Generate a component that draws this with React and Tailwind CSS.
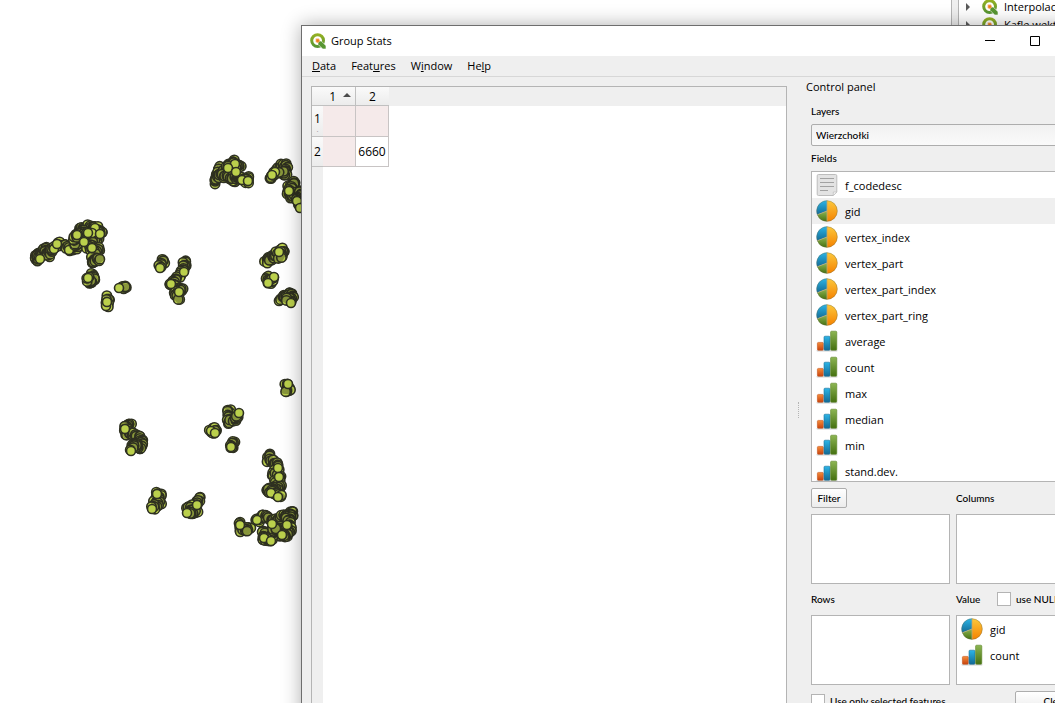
import React from "react";

const CLUSTERS = [
  { path: [[215,182],[220,168],[217,178],[233,161],[240,166],[228,168],[234,180],[224,176],[238,178],[248,178],[247,183]], dots: [[235,164],[228,168],[236,172],[242,180],[248,181]] },
  { path: [[271,179],[275,172],[281,165],[287,166],[286,175],[280,172]], dots: [[275,172],[272,175]] },
  { path: [[289,188],[294,182],[287,194],[293,197],[301,190],[297,202],[301,207]], dots: [[289,191],[297,201],[300,208]] },
  { path: [[266,260],[272,257],[269,261],[279,252],[284,250],[279,259]], dots: [[279,252]] },
  { path: [[267,277],[270,283],[273,278]], dots: [[274,277],[268,283]] },
  { path: [[281,299],[286,295],[292,294],[292,300],[286,299]], dots: [[291,303]] },
  { path: [[35,255],[40,252],[36,260],[45,248],[48,256],[58,243],[64,245],[72,250],[80,244]], dots: [[40,259],[54,249],[57,244],[69,250]] },
  { path: [[77,248],[75,238],[79,230],[89,226],[98,228],[101,231],[98,238],[85,237],[82,230],[92,243],[88,248],[98,249],[93,258],[93,264],[100,258]], dots: [[95,228],[92,233],[77,235],[88,233],[100,234],[84,242],[92,248]] },
  { path: [[91,274],[94,279],[90,283],[88,277]], dots: [[88,278]] },
  { path: [[108,297],[107,306]], dots: [[106,306],[107,302]] },
  { path: [[121,287],[127,288]], dots: [[119,288]] },
  { path: [[164,260],[159,266]], dots: [[160,268]] },
  { path: [[185,261],[183,272],[171,284],[182,290],[175,293],[179,299]], dots: [[184,272],[171,284],[179,292]] },
  { path: [[130,424],[125,425],[127,435],[134,434],[142,441],[141,448],[134,443],[131,450]], dots: [[125,429],[131,451]] },
  { path: [[286,385],[289,390],[285,390]], dots: [[288,384]] },
  { path: [[229,410],[230,419],[227,422],[234,419],[238,414]], dots: [[239,413]] },
  { path: [[210,431],[215,429],[214,434]], dots: [[211,431],[215,433]] },
  { path: [[235,442],[231,445],[233,448]], dots: [[231,447]] },
  { path: [[157,493],[161,496],[155,502],[160,502],[152,509]], dots: [[157,494],[152,509]] },
  { path: [[199,498],[196,505],[188,508],[196,512],[188,514]], dots: [[197,505],[187,513]] },
  { path: [[269,455],[268,460],[275,462],[278,468],[274,474],[281,478],[276,482],[281,487],[267,490],[274,492],[281,497]], dots: [[278,468],[279,477],[271,493],[278,497]] },
  { path: [[240,524],[241,531],[249,527],[246,532]], dots: [[240,525]] },
  { path: [[257,521],[265,516],[272,522],[283,516],[293,513],[288,519],[290,532],[280,530],[288,536],[270,533],[264,533],[263,538],[269,541],[276,527]], dots: [[257,520],[272,524],[287,525],[282,535],[264,538],[271,541]] },
];

const noise = (n) => {
  const v = Math.sin(n * 127.1 + 11.7) * 43758.5453;
  return v - Math.floor(v) - 0.5;
};

const spread = (path) => {
  const out = [];
  path.slice(1).forEach(([x2, y2], i) => {
    const [x1, y1] = path[i];
    const steps = Math.max(4, Math.round(Math.hypot(x2 - x1, y2 - y1) / 0.9));
    for (let s = 0; s < steps; s++) {
      const n = x1 * 3 + y1 * 7 + s + i * 13;
      out.push([
        x1 + ((x2 - x1) * s) / steps + noise(n) * 4,
        y1 + ((y2 - y1) * s) / steps + noise(n + 500) * 4,
      ]);
    }
  });
  return out;
};

const Vertex = ({ at, r = 4.7 }) => (
  <circle cx={at[0]} cy={at[1]} r={r} fill="#bbd04c" stroke="#2f3122" strokeWidth="1.6" />
);

const MapCanvas = () => (
  <svg width="952" height="703" className="block shrink-0" role="img" aria-label="Map canvas">
    {CLUSTERS.map((c, i) => (
      <g key={i}>
        {spread(c.path).map((p, j) => <Vertex key={j} at={p} />)}
        <polyline points={c.path.join(" ")} fill="none" stroke="#2a2c1d" strokeOpacity="0.35" strokeWidth="8" strokeLinejoin="round" strokeLinecap="round" />
        {c.dots.map((p, j) => <Vertex key={j} at={p} r={4.5} />)}
      </g>
    ))}
  </svg>
);

const QgisLogo = () => (
  <svg width="16" height="16" viewBox="0 0 16 16" className="shrink-0" aria-hidden="true">
    <defs>
      <linearGradient id="qg" x1="0" y1="0" x2="0" y2="1">
        <stop offset="0" stopColor="#93b023" />
        <stop offset="1" stopColor="#589632" />
      </linearGradient>
    </defs>
    <circle cx="7.600" cy="7.600" r="5.900" fill="none" stroke="url(#qg)" strokeWidth="3" />
    <path d="M8 8h3.200l4.800 4.700V16h-3.300L8 11.300Z" fill="#589632" stroke="#fff" strokeWidth=".6" />
    <path d="M5.600 5.600H9L10.200 8 8 10.200 5.600 9Z" fill="#f6b26b" />
    <path d="M6.400 6.400h2.400v2.400H6.400Z" fill="#ee7913" />
  </svg>
);

const PieIcon = () => (
  <svg width="22" height="22" viewBox="0 0 22 22" className="shrink-0" aria-hidden="true">
    <defs>
      <linearGradient id="po" x1="0" y1="0" x2="0" y2="1"><stop offset="0" stopColor="#fcc83c" /><stop offset="1" stopColor="#f58200" /></linearGradient>
      <linearGradient id="pb" x1="0" y1="0" x2="0" y2="1"><stop offset="0" stopColor="#2cb5e8" /><stop offset="1" stopColor="#136a94" /></linearGradient>
      <linearGradient id="pg" x1="0" y1="0" x2="0" y2="1"><stop offset="0" stopColor="#8db653" /><stop offset="1" stopColor="#457010" /></linearGradient>
    </defs>
    <path d="M11 .5a10.500 10.500 0 0 1 0 21Z" fill="url(#po)" />
    <path d="M11 .5a10.500 10.500 0 0 0-9.800 14.300L11 11Z" fill="url(#pb)" />
    <path d="M11 21.500a10.500 10.500 0 0 1-9.800-6.700L11 11Z" fill="url(#pg)" />
    <path d="M11 .5v21M11 11l-9.800 3.800" stroke="#b9a77a" strokeWidth=".8" />
    <circle cx="11" cy="11" r="10.300" fill="none" stroke="#6b6b4a" strokeOpacity=".5" strokeWidth=".7" />
  </svg>
);

const BarsIcon = () => (
  <svg width="22" height="22" viewBox="0 0 22 22" className="shrink-0" aria-hidden="true">
    <defs>
      <linearGradient id="br" x1="0" y1="0" x2="0" y2="1"><stop offset="0" stopColor="#f58d3a" /><stop offset="1" stopColor="#c8430f" /></linearGradient>
    </defs>
    <rect x=".5" y="20" width="21" height="1.600" rx=".8" fill="#cfcfcf" />
    <rect x="1.400" y="12.400" width="5.900" height="7.800" rx="1" fill="url(#br)" stroke="#c4501a" strokeWidth=".6" />
    <rect x="8" y="6.200" width="6" height="14" rx="1" fill="url(#pb)" stroke="#1c7198" strokeWidth=".6" />
    <rect x="14.600" y="1.200" width="6.200" height="19" rx="1" fill="url(#pg)" stroke="#5c8428" strokeWidth=".6" />
  </svg>
);

const TextIcon = () => (
  <svg width="22" height="22" viewBox="0 0 22 22" className="shrink-0" aria-hidden="true">
    <path d="M2.500.5h17a1.300 1.300 0 0 1 1.300 1.300V18l-3.500 3.500H2.500a1.300 1.300 0 0 1-1.300-1.300V1.800A1.300 1.300 0 0 1 2.500.5Z" fill="#e3e3e3" stroke="#bdbdbd" />
    <path d="M17.300 21.500V18h3.500Z" fill="#fafafa" stroke="#bdbdbd" strokeWidth=".7" />
    <path d="M4 4.500h14M4 8.500h14M4 12.500h14M4 16.500h8" stroke="#a2a2a2" />
  </svg>
);

const ICONS = { text: TextIcon, pie: PieIcon, bars: BarsIcon };

const FieldItem = ({ icon, name, selected }) => {
  const Icon = ICONS[icon];
  return (
    <li className={"flex h-[26px] items-center gap-[7px] pl-1 font-['Open_Sans','Noto_Sans',sans-serif] text-[11px] " + (selected ? "bg-[#efefef]" : "")}>
      <Icon />
      <span className="pt-0.5">{name}</span>
    </li>
  );
};

const FIELDS = [
  ["text", "f_codedesc"],
  ["pie", "gid", true],
  ["pie", "vertex_index"],
  ["pie", "vertex_part"],
  ["pie", "vertex_part_index"],
  ["pie", "vertex_part_ring"],
  ["bars", "average"],
  ["bars", "count"],
  ["bars", "max"],
  ["bars", "median"],
  ["bars", "min"],
  ["bars", "stand.dev."],
];

const BOX = "border border-[#b4b4b4] bg-white overflow-hidden";
const BUTTON = "rounded-xs border border-[#adadad] bg-linear-to-b from-white to-[#ececec] text-[10px] leading-4";
const HEAD = "border-[#c0c0c0] bg-linear-to-b from-[#fafafa] to-[#ececec] p-0 font-normal";
const CHECK = "size-[14px] shrink-0 appearance-none border border-[#b4b4b4] bg-white checked:bg-[#5a9632]";

const MENUS = [["", "D", "ata"], ["Feat", "u", "res"], ["W", "i", "ndow"], ["He", "l", "p"]];

const ResultTable = () => (
  <div className="relative flex-1 border border-[#b4b4b4] bg-white">
    <div className="flex h-full flex-col">
      <div className="h-[19px] shrink-0 bg-[#efefef]" />
      <div className="w-[11px] flex-1 bg-[#efefef]" />
    </div>
    <table className="absolute top-0 left-0 w-[77px] table-fixed border-separate border-spacing-0 text-center text-xs">
      <colgroup>
        <col className="w-[11px]" />
        <col className="w-[33px]" />
        <col className="w-[33px]" />
      </colgroup>
      <thead>
        <tr className="h-[19px]">
          <th className={HEAD + " border-b"} />
          <th className={HEAD + " border-r border-b"}>
            <span className="flex items-center justify-end gap-[7px] pt-0.5 pr-1 leading-4">
              1
              <svg width="8" height="8" viewBox="0 0 8 8" aria-hidden="true"><path d="M0 4 4 0l4 4Z" fill="#4c4c4c" /></svg>
            </span>
          </th>
          <th className={HEAD + " border-b pt-0.5 leading-4"}>2</th>
        </tr>
      </thead>
      <tbody>
        <tr className="h-[31px]">
          <th className={HEAD + " border-b"}>
            <span className="block leading-4">1</span>
            <span className="block text-[8px] leading-1 text-[#999]">.</span>
          </th>
          <td className="border-r border-b border-[#c8c4c4] bg-[#f5eaea] p-0" />
          <td className="border-r border-b border-[#c8c4c4] bg-[#f5eaea] p-0" />
        </tr>
        <tr className="h-[30px]">
          <th className={HEAD + " border-b"}>2</th>
          <td className="border-r border-b border-[#c8c4c4] bg-[#f5eaea] p-0" />
          <td className="border-r border-b border-[#c8c4c4] bg-white p-0">6660</td>
        </tr>
      </tbody>
    </table>
  </div>
);

const ControlPanel = () => (
  <section className="w-[289px] shrink-0">
    <h2 className="text-[11px] leading-5">Control panel</h2>
    <div className="flex flex-col pl-[5px] font-['Lato','Open_Sans',sans-serif] text-[10px] font-medium">
      <label htmlFor="layers" className="mt-1.5 mb-[5px] leading-4">Layers</label>
      <select id="layers" className="h-[22px] appearance-none rounded-xs border border-[#adadad] bg-linear-to-b from-[#f1f1f1] to-[#fafafa] pl-1">
        <option>Wierzchołki</option>
      </select>
      <h3 className="mt-1 mb-[5px] leading-4">Fields</h3>
      <ul className={BOX + " h-[311px] font-normal"}>
        {FIELDS.map(([icon, name, sel]) => <FieldItem key={name} icon={icon} name={name} selected={sel} />)}
      </ul>
      <div className="mt-1.5 grid grid-cols-2 gap-x-1.5">
        <div className="flex h-5 items-center">
          <button type="button" className={BUTTON + " h-5 w-9"}>Filter</button>
        </div>
        <h3 className="flex h-5 items-center">Columns</h3>
        <div className={BOX + " mt-1.5 h-[70px]"} />
        <div className={BOX + " mt-1.5 h-[70px]"} />
        <h3 className="mt-[5px] flex h-5 items-center">Rows</h3>
        <div className="mt-[5px] flex h-5 items-center">
          <h3 className="w-[41px]">Value</h3>
          <label className="flex items-center gap-[5px] whitespace-nowrap">
            <input type="checkbox" className={CHECK} />
            use NULL
          </label>
        </div>
        <div className={BOX + " mt-1.5 h-[70px]"} />
        <ul className={BOX + " mt-1.5 h-[70px] font-normal"}>
          <FieldItem icon="pie" name="gid" />
          <FieldItem icon="bars" name="count" />
        </ul>
      </div>
      <div className="mt-1.5 flex items-center justify-between">
        <label className="flex items-center gap-[5px]">
          <input type="checkbox" className={CHECK} />
          Use only selected features
        </label>
        <button type="button" className={BUTTON + " h-5 w-20"}>Clear</button>
      </div>
    </div>
  </section>
);

const TreeItem = ({ children }) => (
  <li className="flex h-[18px] items-center">
    <svg width="4" height="8" viewBox="0 0 4 8" className="mr-3 ml-[7px] shrink-0" aria-hidden="true"><path d="M0 0 4 4 0 8Z" fill="#5a5a5a" /></svg>
    <QgisLogo />
    <span className="ml-1.5 text-[11px] whitespace-nowrap">{children}</span>
  </li>
);

export default function App() {
  return (
    <div className="relative h-screen overflow-hidden bg-white font-['Open_Sans','Noto_Sans',sans-serif] text-black">
      <div className="flex h-full">
        <main className="flex-1 overflow-hidden"><MapCanvas /></main>
        <aside className="flex w-[104px] shrink-0">
          <div className="w-2 border-x border-[#b4b4b4] bg-[#efefef]" />
          <ul className="-mt-0.5 flex-1 overflow-hidden">
            <TreeItem>Interpolacja</TreeItem>
            <TreeItem>Kafle wektorowe</TreeItem>
          </ul>
        </aside>
      </div>
      <div role="dialog" aria-label="Group Stats" className="absolute top-[25px] -right-[50px] -bottom-10 left-[301px] flex flex-col border border-[#6e6e6e] bg-[#efefef] shadow-[0_0_18px_rgba(0,0,0,0.32)]">
        <header className="flex h-[30px] shrink-0 items-center bg-white pr-[47px] pl-2">
          <QgisLogo />
          <h1 className="ml-[5px] flex-1 text-[11px]">Group Stats</h1>
          <button type="button" aria-label="Minimize" className="flex h-full w-[45px] items-center justify-center">
            <svg width="10" height="10"><path d="M0 4.500h10" stroke="#000" /></svg>
          </button>
          <button type="button" aria-label="Maximize" className="flex h-full w-[45px] items-center justify-center">
            <svg width="10" height="10"><path d="M.5.5h9v9h-9Z" fill="none" stroke="#000" /></svg>
          </button>
        </header>
        <nav className="flex h-[21px] shrink-0 items-center gap-[15px] border-b border-[#d7d7d7] pl-2.5 text-[11px]">
          {MENUS.map(([a, key, b]) => (
            <button key={b} type="button">{a}<u>{key}</u>{b}</button>
          ))}
        </nav>
        <div className="flex min-h-0 flex-1 pr-[9px] pl-[9px]">
          <div className="flex min-w-0 flex-1 pt-[9px] pb-2.5"><ResultTable /></div>
          <div className="flex w-[19px] shrink-0 items-center justify-center pl-1" aria-hidden="true">
            <div className="h-4 w-px border-l border-dotted border-[#b4b4b4]" />
          </div>
          <ControlPanel />
        </div>
      </div>
    </div>
  );
}
